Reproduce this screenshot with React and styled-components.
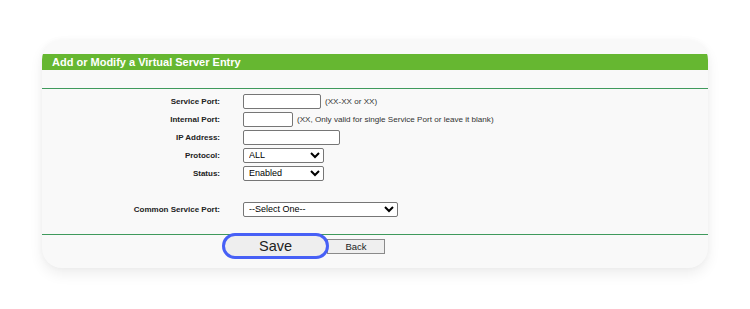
import React from 'react'
import styled, { createGlobalStyle } from 'styled-components'

const GlobalStyle = createGlobalStyle`
  html, body {
    margin: 0;
    padding: 0;
    background: #ffffff;
    font-family: "Liberation Sans", Arial, sans-serif;
  }
`

const Page = styled.div`
  width: 750px;
  height: 309px;
  padding: 40px 0 0 42px;
  box-sizing: border-box;
`

const Card = styled.div`
  width: 666px;
  height: 228px;
  background: #f9f9f9;
  border-radius: 20px;
  box-shadow: 0 6px 14px rgba(0, 0, 0, 0.07), 0 0 6px rgba(0, 0, 0, 0.03);
  padding-top: 14px;
  box-sizing: border-box;
  overflow: hidden;
`

const Header = styled.div`
  height: 16px;
  background: #66b731;
  color: #ffffff;
  font-weight: bold;
  font-size: 11px;
  line-height: 16px;
  padding-left: 10px;
`

const Divider = styled.div`
  height: 1px;
  background: #3f9a5c;
  margin-top: ${p => p.top || 0}px;
`

const Form = styled.div`
  display: grid;
  grid-template-columns: 178px 1fr;
  column-gap: 23px;
  grid-auto-rows: 18px;
  padding: 3px 0 16px;
`

const Label = styled.div`
  display: flex;
  align-items: center;
  justify-content: flex-end;
  font-size: 8px;
  font-weight: bold;
  color: #222;
`

const Field = styled.div`
  display: flex;
  align-items: center;
  gap: 4px;
`

const Spacer = styled.div`
  grid-column: 1 / 3;
  height: 16px;
`

const TextInput = styled.input`
  width: ${p => p.w}px;
  height: 15px;
  box-sizing: border-box;
  border: 1px solid #767676;
  border-radius: 2px;
  background: #fff;
  padding: 0 2px;
  font-size: 9px;
  font-family: "Liberation Sans", Arial, sans-serif;
`

const Select = styled.select`
  width: ${p => p.w}px;
  height: 15px;
  box-sizing: border-box;
  border: 1px solid #767676;
  border-radius: 2px;
  background: #fff;
  padding: 0 1px;
  font-size: 9px;
  color: #000;
  font-family: "Liberation Sans", Arial, sans-serif;
`

const Hint = styled.span`
  font-size: 8.1px;
  color: #333;
`

const Buttons = styled.div`
  display: flex;
  align-items: center;
  padding-left: 180px;
  margin-top: -2px;
`

const SaveButton = styled.button`
  width: 107px;
  height: 26px;
  box-sizing: border-box;
  border: 3px solid #4760f6;
  border-radius: 14px;
  background: #eeeeee;
  color: #222;
  font-size: 14.5px;
  font-family: "Liberation Sans", Arial, sans-serif;
  padding: 0;
  position: relative;
  z-index: 1;
`

const BackButton = styled.button`
  width: 58px;
  height: 15px;
  box-sizing: border-box;
  margin-left: -2px;
  border: 1px solid #8a8a8a;
  background: #efefef;
  color: #222;
  font-size: 9.5px;
  font-family: "Liberation Sans", Arial, sans-serif;
  padding: 0;
`

const rows = [
  { label: 'Service Port:', el: <TextInput w={78} />, hint: '(XX-XX or XX)' },
  { label: 'Internal Port:', el: <TextInput w={50} />, hint: '(XX, Only valid for single Service Port or leave it blank)' },
  { label: 'IP Address:', el: <TextInput w={97} /> },
  { label: 'Protocol:', el: <Select w={81} defaultValue="ALL"><option>ALL</option><option>TCP</option><option>UDP</option></Select> },
  { label: 'Status:', el: <Select w={81} defaultValue="Enabled"><option>Enabled</option><option>Disabled</option></Select> },
]

export default function App() {
  return (
    <>
      <GlobalStyle />
      <Page>
        <Card>
          <Header>Add or Modify a Virtual Server Entry</Header>
          <Divider top={18} />
          <Form>
            {rows.map(r => (
              <React.Fragment key={r.label}>
                <Label>{r.label}</Label>
                <Field>
                  {r.el}
                  {r.hint && <Hint>{r.hint}</Hint>}
                </Field>
              </React.Fragment>
            ))}
            <Spacer />
            <Label>Common Service Port:</Label>
            <Field>
              <Select w={155} defaultValue="--Select One--">
                <option>--Select One--</option>
                <option>HTTP</option>
                <option>FTP</option>
              </Select>
            </Field>
          </Form>
          <Divider />
          <Buttons>
            <SaveButton>Save</SaveButton>
            <BackButton>Back</BackButton>
          </Buttons>
        </Card>
      </Page>
    </>
  )
}
